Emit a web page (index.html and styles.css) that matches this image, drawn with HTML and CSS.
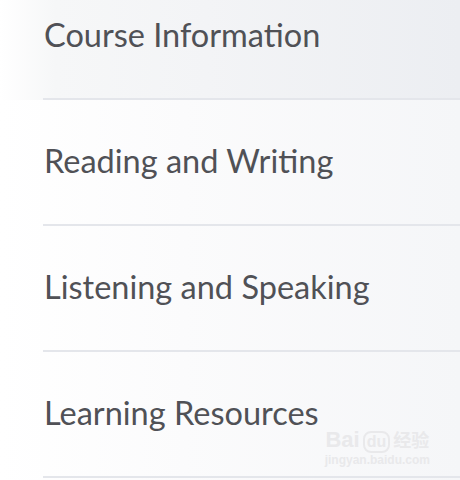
FILE: index.html
```html
<!DOCTYPE html>
<html>
<head>
<meta charset="utf-8">
<link rel="stylesheet" href="styles.css">
</head>
<body>
<ul class="menu">
  <li class="item active"><div class="inner"><span class="label">Course Information</span></div></li>
  <li class="item"><div class="inner"><span class="label">Reading and Writing</span></div></li>
  <li class="item"><div class="inner"><span class="label">Listening and Speaking</span></div></li>
  <li class="item"><div class="inner"><span class="label">Learning Resources</span></div></li>
</ul>
<div class="watermark">
  <div class="wm-top"><span class="wm-bai">Bai</span><span class="wm-du">du</span><span class="wm-cn">经验</span></div>
  <div class="wm-url">jingyan.baidu.com</div>
</div>
</body>
</html>
```
FILE: styles.css
```css
html, body {
  margin: 0;
  padding: 0;
  width: 460px;
  height: 480px;
  overflow: hidden;
}
body {
  position: relative;
  background: linear-gradient(to right, #ffffff 0%, #fbfbfc 40%, #f5f6f8 100%);
  font-family: Lato, "Open Sans", sans-serif;
}
.menu {
  list-style: none;
  margin: -26px 0 0 0;
  padding: 0;
}
.item {
  height: 126px;
}
.item.active {
  background: linear-gradient(to right, #ffffff 0%, #f6f7f8 12%, #f3f4f6 45%, #eceef2 100%);
}
.inner {
  margin-left: 43px;
  height: 124px;
  border-bottom: 2px solid #e4e6eb;
  display: flex;
  align-items: center;
}
.label {
  padding-left: 1px;
  padding-bottom: 3px;
  font-size: 32.5px;
  line-height: 40px;
  color: #505156;
}
.watermark {
  position: absolute;
  right: 30px;
  bottom: 13px;
  color: #e9e9eb;
  font-family: "Liberation Sans", sans-serif;
  text-align: center;
}
.wm-top {
  font-size: 22px;
  font-weight: bold;
  line-height: 24px;
}
.wm-du {
  display: inline-block;
  border: 2px solid #e9e9eb;
  border-radius: 8px;
  padding: 0 2px;
  font-size: 16px;
  line-height: 18px;
  margin: 0 3px;
}
.wm-cn {
  font-family: "Noto Sans CJK SC", sans-serif;
  font-size: 18px;
}
.wm-url {
  font-size: 12px;
  line-height: 14px;
  font-weight: bold;
}
```
